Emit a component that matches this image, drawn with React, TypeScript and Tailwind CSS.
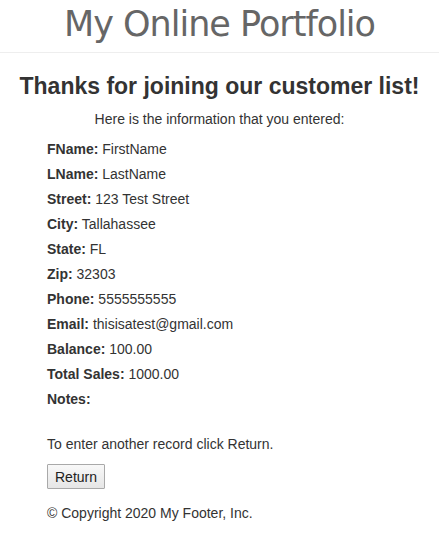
import React from "react";

const rows: [string, string][] = [
  ["FName:", "FirstName"],
  ["LName:", "LastName"],
  ["Street:", "123 Test Street"],
  ["City:", "Tallahassee"],
  ["State:", "FL"],
  ["Zip:", "32303"],
  ["Phone:", "5555555555"],
  ["Email:", "thisisatest@gmail.com"],
  ["Balance:", "100.00"],
  ["Total Sales:", "1000.00"],
  ["Notes:", ""],
];

export default function App() {
  return (
    <div className="min-h-[549px] bg-white text-[#333] text-[14px] leading-[20px] font-['Liberation_Sans',Arial,sans-serif]">
      <header className="h-[53px] border-b border-[#eeeeee] flex items-start justify-center">
        <div className="mt-[1px] text-[35px] leading-[46px] text-[#666] font-['DejaVu_Sans',sans-serif] tracking-[-1px]">
          My Online Portfolio
        </div>
      </header>
      <h3 className="mt-[20px] mb-[10px] text-center text-[23px] leading-[26px] font-bold text-[#333]">
        Thanks for joining our customer list!
      </h3>
      <p className="text-center mb-[10px]">Here is the information that you entered:</p>
      <div className="pl-[47px]">
        {rows.map(([k, v]) => (
          <div key={k} className="mb-[5px] h-[20px]">
            <b>{k}</b> {v}
          </div>
        ))}
        <p className="mt-[25px]">To enter another record click Return.</p>
        <button className="mt-[10px] h-[25px] w-[58px] border border-[#a9a9a9] bg-gradient-to-b from-[#f8f8f8] to-[#e6e6e6] text-[14px] text-[#222] rounded-[1px]">
          Return
        </button>
        <p className="mt-[14px]">© Copyright 2020 My Footer, Inc.</p>
      </div>
    </div>
  );
}
